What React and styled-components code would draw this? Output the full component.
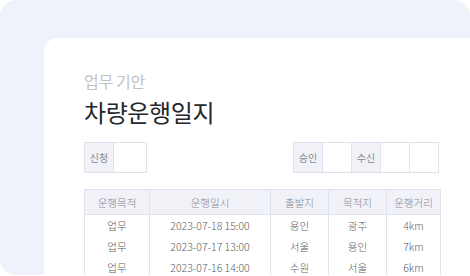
import React from "react";
import styled, { createGlobalStyle } from "styled-components";

const GlobalStyle = createGlobalStyle`
  html, body {
    margin: 0;
    padding: 0;
    background: #ffffff;
  }
  body {
    font-family: "Noto Sans CJK KR", "Noto Sans", sans-serif;
  }
`;

const Backdrop = styled.div`
  width: 470px;
  height: 275px;
  background: #eff2fa;
  border-radius: 16px;
  overflow: hidden;
  padding: 38px 0 0 44px;
  box-sizing: border-box;
`;

const Card = styled.div`
  background: #ffffff;
  border-top-left-radius: 14px;
  height: 100%;
  padding: 32px 31px 0 40px;
  box-sizing: border-box;
`;

const Category = styled.div`
  font-size: 16px;
  line-height: 22px;
  color: #c2c2c6;
  letter-spacing: -0.3px;
`;

const Title = styled.h1`
  margin: 4px 0 0;
  font-size: 24px;
  line-height: 32px;
  font-weight: 400;
  color: #26272b;
  letter-spacing: -0.4px;
`;

const SignRow = styled.div`
  display: flex;
  justify-content: space-between;
  margin-top: 14px;
`;

const SignGroup = styled.div`
  display: flex;
  border: 1px solid #dfe1ec;
  border-right: none;
`;

const SignCell = styled.div`
  width: ${(p) => (p.$wide ? 32 : 28)}px;
  height: 29px;
  border-right: 1px solid #dfe1ec;
  background: ${(p) => (p.$label ? "#f1f2f8" : "#ffffff")};
  display: flex;
  align-items: center;
  justify-content: center;
  font-size: 10px;
  color: #858792;
`;

const Table = styled.table`
  margin-top: 16px;
  width: 356px;
  border-collapse: collapse;
  table-layout: fixed;
  font-size: 10.5px;
  text-align: center;
`;

const Th = styled.th`
  height: 24px;
  padding: 0;
  font-weight: 300;
  color: #858792;
  background: #f1f2f8;
  border: 1px solid #dfe1ec;
`;

const Td = styled.td`
  height: 21px;
  padding: 0;
  font-weight: 300;
  color: #5a5c64;
  border-left: 1px solid #dfe1ec;
  border-right: 1px solid #dfe1ec;
`;

const columns = [
  { label: "운행목적", width: 65 },
  { label: "운행일시", width: 121 },
  { label: "출발지", width: 58 },
  { label: "목적지", width: 58 },
  { label: "운행거리", width: 54 },
];

const rows = [
  ["업무", "2023-07-18 15:00", "용인", "광주", "4km"],
  ["업무", "2023-07-17 13:00", "서울", "용인", "7km"],
  ["업무", "2023-07-16 14:00", "수원", "서울", "6km"],
];

export default function App() {
  return (
    <>
      <GlobalStyle />
      <Backdrop>
        <Card>
          <Category>업무 기안</Category>
          <Title>차량운행일지</Title>
          <SignRow>
            <SignGroup>
              <SignCell $label>신청</SignCell>
              <SignCell $wide />
            </SignGroup>
            <SignGroup>
              <SignCell $label>승인</SignCell>
              <SignCell />
              <SignCell $label>수신</SignCell>
              <SignCell />
              <SignCell />
            </SignGroup>
          </SignRow>
          <Table>
            <colgroup>
              {columns.map((c) => (
                <col key={c.label} style={{ width: c.width }} />
              ))}
            </colgroup>
            <thead>
              <tr>
                {columns.map((c) => (
                  <Th key={c.label}>{c.label}</Th>
                ))}
              </tr>
            </thead>
            <tbody>
              {rows.map((r, i) => (
                <tr key={i}>
                  {r.map((v, j) => (
                    <Td key={j}>{v}</Td>
                  ))}
                </tr>
              ))}
            </tbody>
          </Table>
        </Card>
      </Backdrop>
    </>
  );
}
